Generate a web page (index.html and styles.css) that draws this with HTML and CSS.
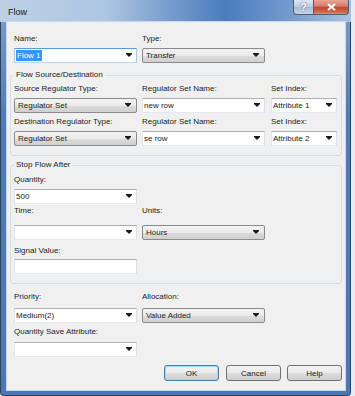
FILE: index.html
```html
<!DOCTYPE html>
<html lang="en">
<head>
    <meta charset="UTF-8">
    <title>Flow</title>
    <link rel="stylesheet" href="styles.css">
</head>
<body>

<div class="window">
    <div class="titlebar">
        <span class="title">Flow</span>
        <div class="caption-buttons">
            <span class="cap-btn help">?</span>
            <span class="cap-btn close">
                <svg width="9" height="8" viewBox="0 0 9 8"><path d="M1 1L8 7M8 1L1 7" stroke="#fff" stroke-width="2"/></svg>
            </span>
        </div>
    </div>

    <div class="client">
        <div class="row plain">
            <div class="field">
                <label>Name:</label>
                <div class="combo edit focus"><span class="selected">Flow 1</span><span class="arrow"></span></div>
            </div>
            <div class="field">
                <label>Type:</label>
                <div class="combo list">Transfer<span class="arrow"></span></div>
            </div>
        </div>

        <fieldset class="group">
            <legend>Flow Source/Destination</legend>
            <div class="row">
                <div class="field">
                    <label>Source Regulator Type:</label>
                    <div class="combo list">Regulator Set<span class="arrow"></span></div>
                </div>
                <div class="field">
                    <label>Regulator Set Name:</label>
                    <div class="combo edit">new row<span class="arrow"></span></div>
                </div>
                <div class="field narrow">
                    <label>Set Index:</label>
                    <div class="combo edit">Attribute 1<span class="arrow"></span></div>
                </div>
            </div>
            <div class="row next">
                <div class="field">
                    <label>Destination Regulator Type:</label>
                    <div class="combo list">Regulator Set<span class="arrow"></span></div>
                </div>
                <div class="field">
                    <label>Regulator Set Name:</label>
                    <div class="combo edit">se row<span class="arrow"></span></div>
                </div>
                <div class="field narrow">
                    <label>Set Index:</label>
                    <div class="combo edit">Attribute 2<span class="arrow"></span></div>
                </div>
            </div>
        </fieldset>

        <fieldset class="group stop">
            <legend>Stop Flow After</legend>
            <div class="row">
                <div class="field">
                    <label>Quantity:</label>
                    <div class="combo edit">500<span class="arrow"></span></div>
                </div>
            </div>
            <div class="row time-row">
                <div class="field">
                    <label>Time:</label>
                    <div class="combo edit"><span class="arrow"></span></div>
                </div>
                <div class="field">
                    <label>Units:</label>
                    <div class="combo list">Hours<span class="arrow"></span></div>
                </div>
            </div>
            <div class="row signal-row">
                <div class="field">
                    <label>Signal Value:</label>
                    <div class="textbox"></div>
                </div>
            </div>
        </fieldset>

        <div class="row plain priority-row">
            <div class="field">
                <label>Priority:</label>
                <div class="combo edit">Medium(2)<span class="arrow"></span></div>
            </div>
            <div class="field">
                <label>Allocation:</label>
                <div class="combo list">Value Added<span class="arrow"></span></div>
            </div>
        </div>
        <div class="row plain next save-row">
            <div class="field">
                <label>Quantity Save Attribute:</label>
                <div class="combo edit"><span class="arrow"></span></div>
            </div>
        </div>

        <div class="buttons">
            <span class="btn default">OK</span>
            <span class="btn">Cancel</span>
            <span class="btn">Help</span>
        </div>
    </div>
</div>

</body>
</html>
```

FILE: styles.css
```css
body {
    margin: 0;
    background-color: #e6ecf3;
    font-family: "Liberation Sans", Arial, sans-serif;
    font-size: 8px;
    color: #222;
}

.window {
    width: 351px;
    height: 396px;
    box-sizing: border-box;
    display: flex;
    flex-direction: column;
    background: linear-gradient(#7d9fcb, #4f7bb9 30%, #4a77b6 100%);
    border: 1px solid #2f4058;
    border-top: none;
    border-radius: 0 0 4px 4px;
}

.titlebar {
    height: 22px;
    margin: 0 -1px;
    display: flex;
    justify-content: space-between;
    align-items: flex-start;
    background: linear-gradient(90deg, #bdd0e6 0%, #aec6e2 30%, #7299cb 50%, #4b7cbd 64%, #6e96ca 80%, #a9c2e1 100%);
}

.title {
    font-size: 9px;
    line-height: 10px;
    margin: 7px 0 0 8px;
    color: #1a1a1a;
}

.caption-buttons {
    display: flex;
    margin-right: 2px;
}

.cap-btn {
    height: 15px;
    box-sizing: border-box;
    display: flex;
    align-items: center;
    justify-content: center;
    border: 1px solid #4a5d75;
    border-top: none;
}

.cap-btn.help {
    width: 20px;
    border-right: none;
    border-radius: 0 0 0 4px;
    background: linear-gradient(#dce6f1, #bccde0 50%, #a7bcd5 51%, #c5d5e7);
    color: #fff;
    font-weight: bold;
    font-size: 10px;
    text-shadow: 0 0 2px #39506c;
}

.cap-btn.close {
    width: 36px;
    border-radius: 0 0 4px 0;
    background: linear-gradient(#e7a697, #d57b66 45%, #c2452f 52%, #cf6d55 90%, #e29c86);
}

.client {
    flex: 1;
    margin: 0 5px 5px 6px;
    padding: 12px 3px 0 3px;
    background-color: #f0f0f0;
    box-shadow: 0 0 0 1px #c9d8ea;
}

.row {
    display: grid;
    grid-template-columns: 128px 129px 66px;
}

.row.plain {
    padding-left: 4px;
}

.row.next {
    margin-top: 4px;
}

.field label {
    display: block;
    line-height: 10px;
    white-space: nowrap;
}

.combo,
.textbox {
    width: 123px;
    height: 15px;
    box-sizing: border-box;
    margin-top: 4px;
    display: flex;
    align-items: center;
    white-space: nowrap;
}

.narrow .combo {
    width: 66px;
}

.combo.edit,
.textbox {
    background-color: #fff;
    border: 1px solid #abadb3;
    border-color: #abadb3 #dbdfe6 #e3e9ef #e2e3ea;
    padding-left: 1px;
}

.combo.focus {
    border-color: #5d9ad8 #a9cbee #b9d6f2 #a9cbee;
}

.selected {
    background-color: #3399ff;
    color: #fff;
    padding: 1px 1px;
    line-height: 9px;
}

.combo.list {
    border: 1px solid #8a8a8a;
    border-radius: 2px;
    padding-left: 3px;
    background: linear-gradient(#f3f3f3, #ebebeb 50%, #dcdcdc 51%, #d0d0d0);
}

.arrow {
    margin-left: auto;
    margin-right: 4px;
    width: 0;
    height: 0;
    border-top: 3px solid #1a1a1a;
    border-left: 3px solid transparent;
    border-right: 3px solid transparent;
    box-shadow: 0 -1px 0 #1a1a1a;
}

.list .arrow {
    margin-right: 5px;
}

.group {
    margin: 7px 0 0 0;
    padding: 4px 2px 9px 3px;
    border: 1px solid #d5dfe5;
    border-radius: 3px;
    min-width: 0;
}

.group legend {
    padding: 0 2px;
    line-height: 10px;
}

.group.stop {
    margin-top: 4px;
    padding-top: 5px;
}

.time-row .combo {
    margin-top: 9px;
}

.time-row {
    margin-top: 2px;
}

.signal-row {
    margin-top: 6px;
}

.signal-row .textbox {
    margin-top: 3px;
}

.priority-row {
    margin-top: 8px;
}

.priority-row .combo {
    margin-top: 6px;
}

.save-row {
    margin-top: 5px;
}

.save-row .combo {
    margin-top: 5px;
}

.buttons {
    display: flex;
    justify-content: flex-end;
    gap: 6px;
    margin-top: 8px;
}

.btn {
    width: 55px;
    height: 16px;
    box-sizing: border-box;
    display: flex;
    align-items: center;
    justify-content: center;
    border: 1px solid #707070;
    border-radius: 3px;
    background: linear-gradient(#f3f3f3, #ebebeb 50%, #dddddd 51%, #cfcfcf);
}

.btn.default {
    margin-right: 1px;
    border-color: #3c7fb1;
    box-shadow: inset 0 0 0 1px #9fd9f6;
}
```
